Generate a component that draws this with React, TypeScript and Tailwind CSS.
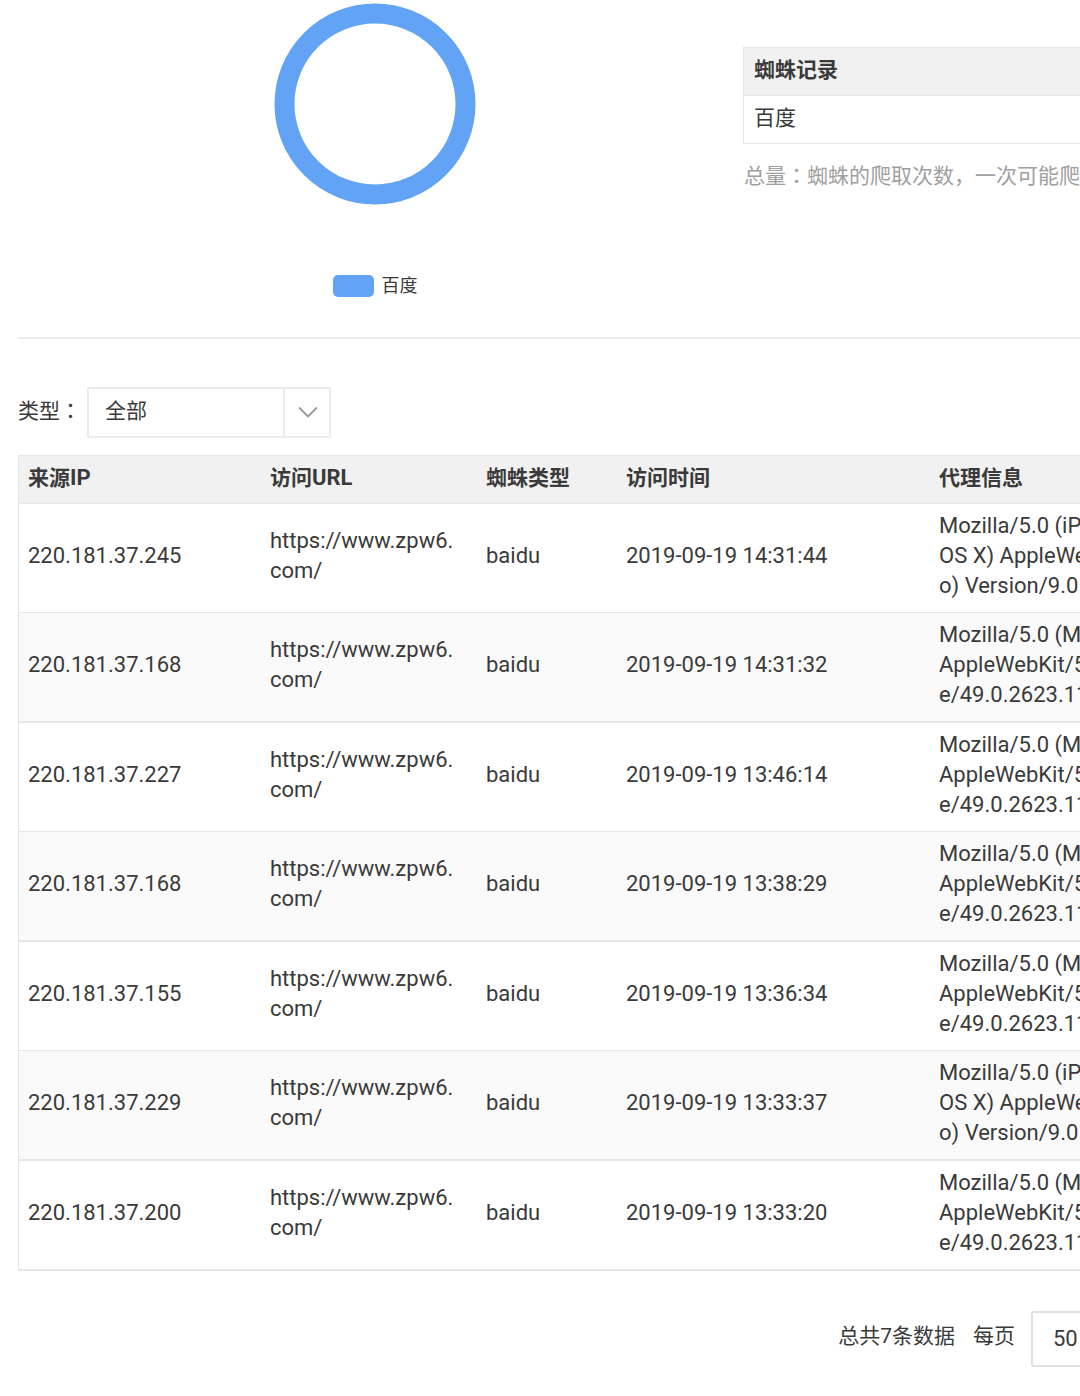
import { useState } from 'react';

const iphone = [
  'Mozilla/5.0 (iPhone; CPU iPhone OS 9_1 like Mac',
  'OS X) AppleWebKit/601.1.46 (KHTML, like Geck',
  'o) Version/9.0 Mobile/13B143 Safari/601.1',
];

const mac = [
  'Mozilla/5.0 (Macintosh; Intel Mac OS X 10_11_0)',
  'AppleWebKit/537.36 (KHTML, like Gecko) Chrom',
  'e/49.0.2623.112 Safari/537.36',
];

const rows = [
  { ip: '220.181.37.245', time: '2019-09-19 14:31:44', agent: iphone },
  { ip: '220.181.37.168', time: '2019-09-19 14:31:32', agent: mac },
  { ip: '220.181.37.227', time: '2019-09-19 13:46:14', agent: mac },
  { ip: '220.181.37.168', time: '2019-09-19 13:38:29', agent: mac },
  { ip: '220.181.37.155', time: '2019-09-19 13:36:34', agent: mac },
  { ip: '220.181.37.229', time: '2019-09-19 13:33:37', agent: iphone },
  { ip: '220.181.37.200', time: '2019-09-19 13:33:20', agent: mac },
];

const heads = [
  { text: '来源', latin: 'IP' },
  { text: '访问', latin: 'URL' },
  { text: '蜘蛛类型' },
  { text: '访问时间' },
  { text: '代理信息' },
];

// full-width colon, centred in its cell
const Colon = () => <span className="font-['Noto_Sans_CJK_JP',sans-serif]">：</span>;

const Chart = () => (
  <div className="flex w-[714px] flex-col items-center pt-[3px]">
    <svg width="202" height="202" viewBox="0 0 202 202" role="img" aria-label="百度">
      <circle cx="101" cy="101" r="90.5" fill="none" stroke="#62a3f5" strokeWidth="20" />
    </svg>
    <div className="mt-[67px] flex items-center gap-2 text-[18px] leading-[27px]">
      <span className="h-[22px] w-[41px] rounded-[5px] bg-[#62a3f5]" />
      百度
    </div>
  </div>
);

const Summary = () => (
  <div className="flex-1 pt-[47px] pl-[11px]">
    <table className="w-full border-separate border-spacing-0 border border-[#e4e7e9] text-left">
      <thead>
        <tr className="bg-[#f1f1f1]">
          <th className="w-1/2 border-b border-[#e4e7e9] px-[10px] pt-[7px] pb-[10px] leading-[30px]">蜘蛛记录</th>
          <th className="border-b border-[#e4e7e9] px-[10px] pt-[7px] pb-[10px] leading-[30px]">总量</th>
        </tr>
      </thead>
      <tbody>
        <tr>
          <td className="px-[10px] pt-[7px] pb-[10px] leading-[30px]">百度</td>
          <td className="px-[10px] pt-[7px] pb-[10px] leading-[30px]">7</td>
        </tr>
      </tbody>
    </table>
    <p className="mt-[15px] pl-px leading-[30px] whitespace-nowrap text-[#a0a0a0]">
      总量
      <Colon />
      蜘蛛的爬取次数，一次可能爬取多个页面
    </p>
  </div>
);

const App = () => {
  const [type, setType] = useState('all');
  const [size, setSize] = useState('50');

  return (
    <div className="w-full overflow-x-auto bg-white font-[Roboto,'Noto_Sans_CJK_SC',sans-serif] text-[21px] text-[#3a3a3a] [scrollbar-width:none]">
      <div className="min-w-[1494px] px-[18px] pb-[30px]">
        <div className="flex h-[339px] border-b-2 border-[#eaecee]">
          <Chart />
          <Summary />
        </div>

        <div className="mt-12 flex h-[51px] items-center">
          <label htmlFor="type" className="w-[69px] pb-[6px] leading-[30px] whitespace-nowrap">
            类型
            <Colon />
          </label>
          <div className="relative h-full w-[244px]">
            <select
              id="type"
              value={type}
              onChange={(e) => setType(e.target.value)}
              className="h-full w-full appearance-none border-2 border-[#eaecee] bg-white pr-12 pb-[2px] pl-4"
            >
              <option value="all">全部</option>
              <option value="baidu">baidu</option>
            </select>
            <div className="pointer-events-none absolute inset-y-0 right-0 flex w-12 items-center justify-center border-l-2 border-[#eaecee] pb-[2px]">
              <svg width="20" height="12" viewBox="0 0 20 12" fill="none" stroke="#999" strokeWidth="1.8">
                <path d="M1 1.5 10 10.5 19 1.5" />
              </svg>
            </div>
          </div>
        </div>

        <table className="mt-[17px] w-full table-fixed border-separate border-spacing-0 border border-[#e4e7e9] text-left">
          <colgroup>
            <col className="w-[242px]" />
            <col className="w-[216px]" />
            <col className="w-[140px]" />
            <col className="w-[313px]" />
            <col />
          </colgroup>
          <thead>
            <tr className="bg-[#f1f1f1]">
              {heads.map((head) => (
                <th key={head.text} className="border-b border-[#e4e7e9] px-[9px] pt-[7px] pb-[10px] leading-[30px]">
                  {head.text}
                  {head.latin && <span className="text-[22px] leading-none">{head.latin}</span>}
                </th>
              ))}
            </tr>
          </thead>
          <tbody className="text-[22px] leading-[30px] [&_td]:border-[#e4e7e9] [&_td]:px-[9px] [&_td]:pt-[7px] [&_td]:pb-[11px] [&>tr:nth-child(even)]:bg-[#fafafa] [&>tr:nth-child(even)_td]:border-b-2 [&>tr:nth-child(odd)_td]:border-b">
            {rows.map((row) => (
              <tr key={row.time}>
                <td>{row.ip}</td>
                <td>
                  https://www.zpw6.
                  <br />
                  com/
                </td>
                <td>baidu</td>
                <td>{row.time}</td>
                <td className="whitespace-nowrap">
                  {row.agent.map((line) => (
                    <div key={line}>{line}</div>
                  ))}
                </td>
              </tr>
            ))}
          </tbody>
        </table>

        <div className="mt-10 flex h-[56px] items-center justify-end">
          <span className="pb-[6px] leading-[30px]">总共7条数据</span>
          <label htmlFor="size" className="mr-4 ml-[18px] pb-[6px] leading-[30px]">
            每页
          </label>
          <select
            id="size"
            value={size}
            onChange={(e) => setSize(e.target.value)}
            className="h-full w-[120px] appearance-none rounded-[3px] border-2 border-[#dfe1e3] bg-white pb-[2px] pl-5 text-[22px]"
          >
            <option value="20">20</option>
            <option value="50">50</option>
            <option value="100">100</option>
          </select>
          <div className="flex w-[325px] items-center gap-4 pl-4">
            <span>条</span>
            <button type="button">上一页</button>
            <button type="button">下一页</button>
          </div>
        </div>
      </div>
    </div>
  );
};

export default App;
